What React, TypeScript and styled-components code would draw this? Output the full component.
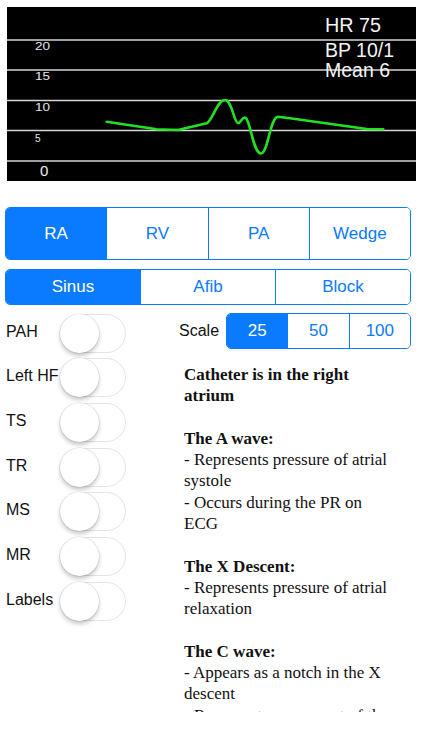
import React from "react";
import styled, { createGlobalStyle } from "styled-components";

const BLUE = "#0a7aff";

const GlobalStyle = createGlobalStyle`
  html, body { margin: 0; padding: 0; background: #ffffff; }
  body { font-family: "Liberation Sans", Arial, Helvetica, sans-serif; color: #111; }
`;

const Page = styled.div`
  width: 423px;
  height: 750px;
  overflow: hidden;
  box-sizing: border-box;
  padding-top: 7px;
  display: flex;
  flex-direction: column;
  background: #fff;
`;

const ChartSvg = styled.svg`
  display: block;
  flex-shrink: 0;
  margin: 0 7px;
  width: 409px;
  height: 174px;
  background: #000;
`;

const SegmentGroup = styled.div<{ $height: number; $top: number }>`
  display: flex;
  flex-shrink: 0;
  box-sizing: border-box;
  height: ${(p) => p.$height}px;
  margin: ${(p) => p.$top}px 0 0 5px;
  width: 406px;
  border: 1.3px solid ${BLUE};
  border-radius: 5px;
  overflow: hidden;
`;

const ScaleGroup = styled.div`
  display: flex;
  box-sizing: border-box;
  height: 36px;
  width: 185px;
  border: 1.3px solid ${BLUE};
  border-radius: 5px;
  overflow: hidden;
`;

const Segment = styled.div<{ $active?: boolean }>`
  flex: 1;
  display: flex;
  align-items: center;
  justify-content: center;
  font-size: 17px;
  background: ${(p) => (p.$active ? BLUE : "#fff")};
  color: ${(p) => (p.$active ? "#fff" : BLUE)};
  & + & {
    border-left: 1.3px solid ${BLUE};
  }
`;

const Body = styled.div`
  display: flex;
  margin-top: 8px;
`;

const LeftColumn = styled.div`
  width: 179px;
  flex-shrink: 0;
  display: flex;
  flex-direction: column;
  gap: 4.7px;
  padding-left: 6px;
  box-sizing: border-box;
`;

const ToggleRow = styled.div`
  display: flex;
  align-items: center;
  height: 40px;
`;

const ToggleLabel = styled.span`
  width: 54px;
  font-size: 16px;
  color: #111;
  white-space: nowrap;
  margin-top: -3px;
`;

const Track = styled.div`
  position: relative;
  box-sizing: border-box;
  width: 66px;
  height: 39px;
  border-radius: 20px;
  border: 1.5px solid #e4e4e4;
  background: #fff;
`;

const Knob = styled.div`
  position: absolute;
  left: -1.5px;
  top: -1px;
  width: 39px;
  height: 39px;
  border-radius: 50%;
  background: #fff;
  box-shadow: 0 3px 4px rgba(0, 0, 0, 0.22), 0 0 0 0.6px rgba(0, 0, 0, 0.12);
`;

const RightColumn = styled.div`
  display: flex;
  flex-direction: column;
`;

const ScaleRow = styled.div`
  display: flex;
  align-items: center;
  height: 36px;
`;

const ScaleLabel = styled.span`
  width: 47px;
  font-size: 16px;
  color: #111;
`;

const InfoText = styled.div`
  margin: 15px 0 0 5px;
  width: 212px;
  height: 348px;
  overflow: hidden;
  font-family: "Liberation Serif", "Times New Roman", serif;
  font-size: 17px;
  line-height: 21.3px;
  color: #111;
`;

const Section = styled.div`
  margin-bottom: 21.3px;
`;

const Heading = styled.div`
  font-weight: bold;
`;

const Line = styled.div``;

function Toggle({ label }: { label: string }) {
  return (
    <ToggleRow>
      <ToggleLabel>{label}</ToggleLabel>
      <Track>
        <Knob />
      </Track>
    </ToggleRow>
  );
}

function Chart() {
  const lines = [33, 63, 93.5, 123.5, 154];
  return (
    <ChartSvg viewBox="0 0 409 174">
      {lines.map((y) => (
        <line key={y} x1="0" x2="409" y1={y} y2={y} stroke="#d6d6d6" strokeWidth="1.5" />
      ))}
      <g fill="#e6e6e6" fontFamily="Liberation Sans, Arial, sans-serif" fontSize="10">
        <text x="28" y="43" textLength="15" lengthAdjust="spacingAndGlyphs">20</text>
        <text x="28" y="73" textLength="15" lengthAdjust="spacingAndGlyphs">15</text>
        <text x="28" y="104" textLength="15" lengthAdjust="spacingAndGlyphs">10</text>
        <text x="28" y="135">5</text>
      </g>
      <text x="33" y="169" fill="#f0f0f0" fontFamily="Liberation Sans, Arial, sans-serif" fontSize="15">0</text>
      <g fill="#f4f4f4" fontFamily="Liberation Sans, Arial, sans-serif" fontSize="19.5">
        <text x="318" y="25" textLength="56" lengthAdjust="spacingAndGlyphs">HR 75</text>
        <text x="318" y="50">BP 10/1</text>
        <text x="318" y="70">Mean 6</text>
      </g>
      <path
        d="M99.7,114.7 L149.7,122.3 L171,123 L199.7,116.3 C206,113 210,93 218,93 C225,93 227,116 231,116 C234,116 235,110 238,110.5 C243,111 246,146.5 254,146.5 C261,146.5 263,110 271,109.7 L283,111.3 L359.7,122 L376.3,122.3"
        fill="none"
        stroke="#22e022"
        strokeWidth="2.6"
        strokeLinejoin="round"
        strokeLinecap="round"
      />
    </ChartSvg>
  );
}

export default function App() {
  return (
    <Page>
      <GlobalStyle />
      <Chart />
      <SegmentGroup $height={53} $top={26}>
        <Segment $active>RA</Segment>
        <Segment>RV</Segment>
        <Segment>PA</Segment>
        <Segment>Wedge</Segment>
      </SegmentGroup>
      <SegmentGroup $height={36} $top={9}>
        <Segment $active>Sinus</Segment>
        <Segment>Afib</Segment>
        <Segment>Block</Segment>
      </SegmentGroup>
      <Body>
        <LeftColumn>
          {["PAH", "Left HF", "TS", "TR", "MS", "MR", "Labels"].map((l) => (
            <Toggle key={l} label={l} />
          ))}
        </LeftColumn>
        <RightColumn>
          <ScaleRow>
            <ScaleLabel>Scale</ScaleLabel>
            <ScaleGroup>
              <Segment $active>25</Segment>
              <Segment>50</Segment>
              <Segment>100</Segment>
            </ScaleGroup>
          </ScaleRow>
          <InfoText>
            <Section>
              <Heading>Catheter is in the right atrium</Heading>
            </Section>
            <Section>
              <Heading>The A wave:</Heading>
              <Line>- Represents pressure of atrial systole</Line>
              <Line>- Occurs during the PR on ECG</Line>
            </Section>
            <Section>
              <Heading>The X Descent:</Heading>
              <Line>- Represents pressure of atrial relaxation</Line>
            </Section>
            <Section>
              <Heading>The C wave:</Heading>
              <Line>- Appears as a notch in the X descent</Line>
              <Line>- Represents movement of the tricuspid valve towards the atrium</Line>
            </Section>
          </InfoText>
        </RightColumn>
      </Body>
    </Page>
  );
}
